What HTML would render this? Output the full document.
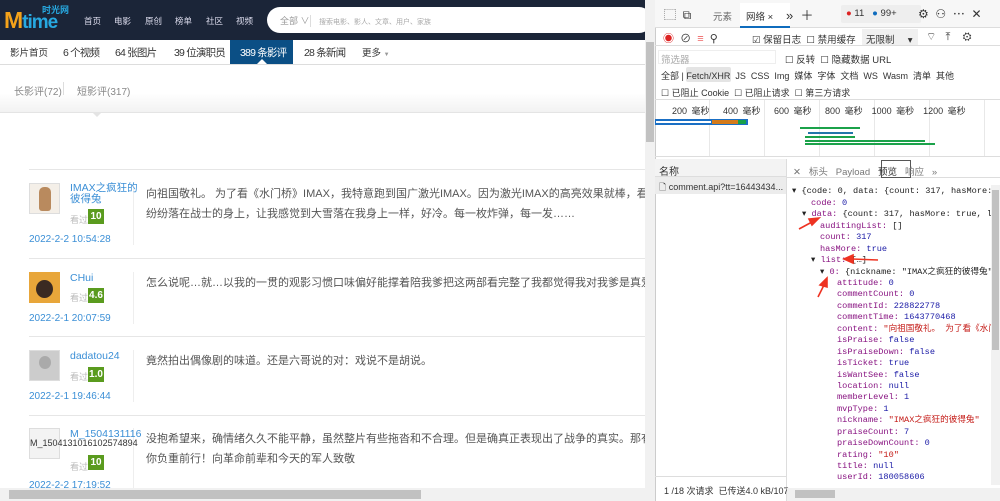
<!DOCTYPE html>
<html><head><meta charset="utf-8"><style>
*{margin:0;padding:0;box-sizing:border-box}
body{width:1000px;height:501px;overflow:hidden;position:relative;background:#fff;font-family:"Liberation Sans","Noto Sans CJK SC",sans-serif;}
.a{position:absolute;white-space:nowrap}
.hdr{left:0;top:0;width:645px;height:40px;background:#1b2538}
.nav{color:#dde;font-size:8.5px;top:15px}
.sub{font-size:10.5px;color:#333;top:45px;letter-spacing:-0.8px}
.sep{left:29px;width:616px;height:1px;background:#e6e6e6}
.nm{color:#3b8fd6;font-size:10.5px}
.kt{color:#bbb;font-size:9px}
.sc{background:#5a9b1e;color:#fff;font-size:10px;font-weight:bold;width:16px;height:15px;text-align:center;line-height:15px}
.tm{color:#3b8fd6;font-size:10px}
.ct{color:#555;font-size:11px}
.dv{left:133px;width:1px;background:#eee}
.dt{font-size:10px;color:#333}
.j{font-family:"Liberation Mono","Noto Sans CJK SC",monospace;font-size:8.6px;color:#881280;line-height:11.44px}
.j b{font-weight:normal;color:#1a1aa6}
.j i{font-style:normal;color:#c41a16}
.j s{text-decoration:none;color:#222}
</style></head><body>
<div class="a hdr"></div>
<div class="a" style="left:4px;top:7px;font-size:23px;font-weight:bold;color:#f4a21a;letter-spacing:-1px">M<span style="color:#27a9e1;font-size:19px">time</span></div>
<div class="a" style="left:42px;top:3px;font-size:9px;color:#27a9e1;font-weight:bold">时光网</div>
<div class="a nav" style="left:84px">首页</div><div class="a nav" style="left:114px">电影</div><div class="a nav" style="left:145px">原创</div><div class="a nav" style="left:175px">榜单</div><div class="a nav" style="left:206px">社区</div><div class="a nav" style="left:236px">视频</div>
<div class="a" style="left:267px;top:7px;width:385px;height:26px;background:#fff;border-radius:13px"></div>
<div class="a" style="left:280px;top:14px;font-size:9px;color:#999">全部 ∨</div>
<div class="a" style="left:310px;top:15px;width:1px;height:12px;background:#ddd"></div>
<div class="a" style="left:319px;top:17px;font-size:7px;color:#aaa">搜索电影、影人、文章、用户、家族</div>
<div class="a" style="left:230px;top:40px;width:63px;height:24px;background:#0b4f85"></div>
<div class="a sub" style="left:10px;font-size:9.5px;letter-spacing:0">影片首页</div>
<div class="a sub" style="left:63px">6 个视频</div><div class="a sub" style="left:115px">64 张图片</div><div class="a sub" style="left:174px">39 位演职员</div>
<div class="a sub" style="left:240px;color:#fff">389 条影评</div>
<div class="a" style="left:257px;top:59px;width:0;height:0;border:5px solid transparent;border-bottom-color:#fff;border-top:0"></div>
<div class="a sub" style="left:304px">28 条新闻</div>
<div class="a sub" style="left:362px;font-size:9.5px;letter-spacing:0">更多 <span style="font-size:6px;color:#999">▼</span></div>
<div class="a" style="left:0;top:64px;width:645px;height:1px;background:#ddd"></div>
<div class="a" style="left:0;top:65px;width:645px;height:47px;background:linear-gradient(#fff 60%,#f2f2f2)"></div>
<div class="a" style="left:0;top:112px;width:645px;height:1px;background:#e4e4e4"></div>
<div class="a" style="left:92px;top:112px;width:0;height:0;border:5px solid transparent;border-top-color:#e4e4e4;border-bottom:0"></div>
<div class="a" style="left:14px;top:83px;font-size:10px;color:#888">长影评(72)</div>
<div class="a" style="left:63px;top:82px;width:1px;height:13px;background:#ddd"></div>
<div class="a" style="left:77px;top:83px;font-size:10px;color:#888">短影评(317)</div>

<div class="a sep" style="top:169px"></div>
<div class="a sep" style="top:258px"></div>
<div class="a sep" style="top:336px"></div>
<div class="a sep" style="top:415px"></div>
<div class="a dv" style="top:183px;height:62px"></div>
<div class="a dv" style="top:272px;height:52px"></div>
<div class="a dv" style="top:350px;height:52px"></div>
<div class="a dv" style="top:428px;height:62px"></div>
<div class="a" style="left:29px;top:183px;width:31px;height:31px;border:1px solid #ddd;background:#f4efe8"><div style="margin:3px 9px;width:12px;height:24px;background:#b98a5e;border-radius:5px 5px 3px 3px"></div></div>
<div class="a nm" style="left:70px;top:183px;line-height:11px">IMAX之疯狂的<br>彼得兔</div>
<div class="a kt" style="left:70px;top:213px">看过</div><div class="a sc" style="left:88px;top:209px">10</div>
<div class="a tm" style="left:29px;top:234px">2022-2-2 10:54:28</div>
<div class="a ct" style="left:146px;top:185px">向祖国敬礼。 为了看《水门桥》IMAX，我特意跑到国广激光IMAX。因为激光IMAX的高亮效果就棒，看到比</div>
<div class="a ct" style="left:146px;top:205px">纷纷落在战士的身上，让我感觉到大雪落在我身上一样，好冷。每一枚炸弹，每一发……</div>
<div class="a" style="left:29px;top:272px;width:31px;height:31px;background:#e8a63a"><div style="margin:8px 7px;width:17px;height:18px;background:#3a2a22;border-radius:50%"></div></div>
<div class="a nm" style="left:70px;top:272px">CHui</div>
<div class="a kt" style="left:70px;top:291px">看过</div><div class="a sc" style="left:88px;top:288px">4.6</div>
<div class="a tm" style="left:29px;top:313px">2022-2-1 20:07:59</div>
<div class="a ct" style="left:146px;top:274px">怎么说呢…就…以我的一贯的观影习惯口味偏好能撑着陪我爹把这两部看完整了我都觉得我对我爹是真爱孝心</div>
<div class="a" style="left:29px;top:350px;width:31px;height:31px;background:#ccc;border:1px solid #ddd"><div style="margin:5px 9px 0;width:12px;height:13px;background:#aaa;border-radius:50%"></div></div>
<div class="a nm" style="left:70px;top:350px">dadatou24</div>
<div class="a kt" style="left:70px;top:370px">看过</div><div class="a sc" style="left:88px;top:367px">1.0</div>
<div class="a tm" style="left:29px;top:391px">2022-2-1 19:46:44</div>
<div class="a ct" style="left:146px;top:352px">竟然拍出偶像剧的味道。还是六哥说的对：戏说不是胡说。</div>
<div class="a" style="left:29px;top:428px;width:31px;height:31px;border:1px solid #ddd;background:#f3f3f3"></div>
<div class="a" style="left:30px;top:438px;font-size:9px;color:#333">M_1504131016102574894</div>
<div class="a nm" style="left:70px;top:428px">M_1504131116</div>
<div class="a kt" style="left:70px;top:460px">看过</div><div class="a sc" style="left:88px;top:455px">10</div>
<div class="a tm" style="left:29px;top:480px">2022-2-2 17:19:52</div>
<div class="a ct" style="left:146px;top:430px">没抱希望来，确情绪久久不能平静，虽然整片有些拖沓和不合理。但是确真正表现出了战争的真实。那有什么</div>
<div class="a ct" style="left:146px;top:450px">你负重前行！向革命前辈和今天的军人致敬</div>
<div class="a" style="left:0;top:488px;width:645px;height:13px;background:#f1f1f1"></div>
<div class="a" style="left:9px;top:490px;width:412px;height:9px;background:#c1c1c1"></div>
<div class="a" style="left:645px;top:0;width:10px;height:501px;background:#f1f1f1"></div>
<div class="a" style="left:646px;top:42px;width:8px;height:100px;background:#c1c1c1"></div>

<div class="a" style="left:655px;top:0;width:345px;height:501px;background:#fff;border-left:1px solid #ccc"></div>
<div class="a" style="left:655px;top:0;width:345px;height:28px;background:#f7f7f7;border-bottom:1px solid #ddd"></div>
<div class="a" style="left:740px;top:3px;width:50px;height:25px;background:#fff;border-bottom:2px solid #0f6cbd"></div>
<div class="a dt" style="left:664px;top:6px;font-size:12px">⬚ &nbsp;⧉</div>
<div class="a dt" style="left:713px;top:9px;color:#666;font-size:9.5px">元素</div>
<div class="a dt" style="left:746px;top:9px;font-size:9.5px">网络 ×</div>
<div class="a dt" style="left:786px;top:5px;font-size:13px">» &nbsp;＋</div>
<div class="a" style="left:841px;top:5px;width:80px;height:18px;background:#eee;border-radius:2px"></div>
<div class="a dt" style="left:846px;top:8px;font-size:9.5px"><span style="color:#d22">●</span> 11 &nbsp;&nbsp;<span style="color:#0f6cbd">●</span> 99+</div>
<div class="a dt" style="left:918px;top:5px;font-size:12px">⚙ &nbsp;⚇ &nbsp;⋯ &nbsp;✕</div>
<div class="a" style="left:655px;top:28px;width:345px;height:18px;border-bottom:1px solid #ddd"></div>
<div class="a dt" style="left:663px;top:30px;font-size:11px"><span style="color:#d22">◉</span> &nbsp;⊘ &nbsp;<span style="color:#e66">≡</span> &nbsp;⚲</div>
<div class="a dt" style="left:752px;top:32px;font-size:9.5px">☑ 保留日志 &nbsp;☐ 禁用缓存</div>
<div class="a" style="left:862px;top:29px;width:56px;height:16px;background:#f0f0f0"></div>
<div class="a dt" style="left:866px;top:32px;font-size:9.5px">无限制 &nbsp;&nbsp;&nbsp;&nbsp;▾</div>
<div class="a dt" style="left:926px;top:30px;font-size:11px">⌔ &nbsp;&nbsp;⤒ &nbsp;&nbsp;&nbsp;⚙</div>
<div class="a" style="left:658px;top:50px;width:118px;height:14px;background:#fff;border:1px solid #eee"></div>
<div class="a dt" style="left:661px;top:52px;color:#aaa;font-size:9.5px">筛选器</div>
<div class="a dt" style="left:785px;top:52px;font-size:9.5px">☐ 反转 &nbsp;☐ 隐藏数据 URL</div>
<div class="a" style="left:686px;top:67px;width:45px;height:15px;background:#e4e4e4;border-radius:2px"></div>
<div class="a dt" style="left:661px;top:69px;font-size:9px">全部 | Fetch/XHR &nbsp;JS &nbsp;CSS &nbsp;Img &nbsp;媒体 &nbsp;字体 &nbsp;文档 &nbsp;WS &nbsp;Wasm &nbsp;清单 &nbsp;其他</div>
<div class="a dt" style="left:661px;top:86px;font-size:9px">☐ 已阻止 Cookie &nbsp;☐ 已阻止请求 &nbsp;☐ 第三方请求</div>
<div class="a" style="left:655px;top:99px;width:345px;height:58px;border-top:1px solid #ddd;border-bottom:1px solid #ddd;background:repeating-linear-gradient(90deg,transparent 0 54px,#e8e8e8 54px 55px)"></div>
<div class="a dt" style="left:672px;top:104px;font-size:9px;word-spacing:2px">200 毫秒 &nbsp;&nbsp;400 毫秒 &nbsp;&nbsp;600 毫秒 &nbsp;&nbsp;800 毫秒 &nbsp;1000 毫秒 &nbsp;1200 毫秒</div>
<div class="a" style="left:655px;top:119px;width:93px;height:6px;background:#1a6fc4"></div>
<div class="a" style="left:712px;top:120px;width:26px;height:4px;background:#d47a1a"></div>
<div class="a" style="left:738px;top:120px;width:8px;height:4px;background:#17a04a"></div>
<div class="a" style="left:656px;top:121px;width:55px;height:2px;background:#fff"></div>
<div class="a" style="left:800px;top:127px;width:60px;height:2px;background:#1ba24a"></div>
<div class="a" style="left:808px;top:132px;width:45px;height:2px;background:#27a"></div>
<div class="a" style="left:805px;top:136px;width:50px;height:2px;background:#1ba24a"></div>
<div class="a" style="left:805px;top:140px;width:120px;height:2px;background:#1ba24a"></div>
<div class="a" style="left:805px;top:143px;width:130px;height:2px;background:#1ba24a"></div>
<div class="a" style="left:655px;top:159px;width:131px;height:18px;background:#f3f3f3;border-bottom:1px solid #ddd"></div>
<div class="a dt" style="left:659px;top:163px">名称</div>
<div class="a" style="left:655px;top:177px;width:131px;height:17px;background:#ececec"></div>
<div class="a dt" style="left:659px;top:180px;font-size:9px">🗋 comment.api?tt=16443434...</div>
<div class="a" style="left:786px;top:159px;width:1px;height:342px;background:#ddd"></div>
<div class="a" style="left:655px;top:476px;width:131px;height:25px;border-top:1px solid #ddd"></div>
<div class="a dt" style="left:664px;top:484px;font-size:9px">1 /18 次请求 &nbsp;已传送4.0 kB/107</div>
<div class="a" style="left:787px;top:159px;width:213px;height:19px;border-bottom:1px solid #ddd"></div>
<div class="a" style="left:881px;top:160px;width:30px;height:18px;border:1px solid #555"></div>
<div class="a dt" style="left:793px;top:164px;color:#777;font-size:9.5px">✕ &nbsp;&nbsp;标头 &nbsp;&nbsp;Payload &nbsp;&nbsp;<span style="color:#333">预览</span> &nbsp;&nbsp;响应 &nbsp;&nbsp;»</div>
<div class="a j" style="left:792px;top:186px"><s>▾ {code: 0, data: {count: 317, hasMore: t</s></div>
<div class="a j" style="left:811px;top:197.5px">code: <b>0</b></div>
<div class="a j" style="left:802px;top:209px"><s>▾</s> data: <s>{count: 317, hasMore: true, list</s></div>
<div class="a j" style="left:820px;top:220.5px">auditingList: <s>[]</s></div>
<div class="a j" style="left:820px;top:232px">count: <b>317</b></div>
<div class="a j" style="left:820px;top:243.5px">hasMore: <b>true</b></div>
<div class="a j" style="left:811px;top:255px"><s>▾</s> list: <s>[…]</s></div>
<div class="a j" style="left:820px;top:266.5px"><s>▾</s> 0: <s>{nickname: "IMAX之疯狂的彼得兔",</s></div>
<div class="a j" style="left:837px;top:278px">attitude: <b>0</b><br>commentCount: <b>0</b><br>commentId: <b>228822778</b><br>commentTime: <b>1643770468</b><br>content: <i>"向祖国敬礼。 为了看《水门</i><br>isPraise: <b>false</b><br>isPraiseDown: <b>false</b><br>isTicket: <b>true</b><br>isWantSee: <b>false</b><br>location: <b>null</b><br>memberLevel: <b>1</b><br>mvpType: <b>1</b><br>nickname: <i>"IMAX之疯狂的彼得兔"</i><br>praiseCount: <b>7</b><br>praiseDownCount: <b>0</b><br>rating: <i>"10"</i><br>title: <b>null</b><br>userId: <b>180058606</b></div>
<svg class="a" style="left:0;top:0" width="1000" height="501"><g stroke="#e32" stroke-width="1.6" fill="#e32">
<line x1="799" y1="229" x2="812" y2="222"/><polygon points="819,218 809,219 812,225"/>
<line x1="878" y1="260" x2="852" y2="259"/><polygon points="844,259 853,255 853,263"/>
<line x1="818" y1="297" x2="824" y2="285"/><polygon points="827,278 820,285 827,287"/>
</g></svg>
<div class="a" style="left:991px;top:185px;width:9px;height:300px;background:#f1f1f1"></div>
<div class="a" style="left:992px;top:190px;width:7px;height:160px;background:#c1c1c1"></div>
<div class="a" style="left:787px;top:488px;width:213px;height:13px;background:#f1f1f1"></div>
<div class="a" style="left:795px;top:490px;width:40px;height:8px;background:#c1c1c1"></div>
</body></html>
